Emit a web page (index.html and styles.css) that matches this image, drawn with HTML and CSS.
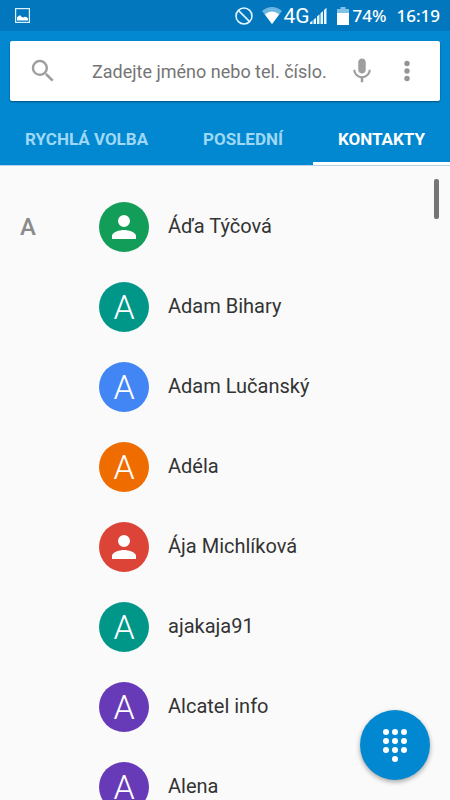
FILE: index.html
```html
<!DOCTYPE html>
<html lang="cs">
<head>
<meta charset="utf-8">
<meta name="viewport" content="width=device-width, initial-scale=1">
<title>Kontakty</title>
<link rel="stylesheet" href="styles.css">
</head>
<body>
<div class="app">
  <div class="status">
    <svg class="status-picture" width="15" height="15" viewBox="0 0 15 15" aria-hidden="true"><rect x=".6" y=".6" width="13.8" height="13.8" fill="none" stroke="#d9f2fc" stroke-width="1.2"/><path fill="#fff" d="M2 12.5V9.2L4 7.7 5.2 7.3 6.5 8.8 8 9.6 9.7 8.7 11.5 9.1 13 10.5V12.5Z"/></svg>
    <svg width="18" height="18" viewBox="0 0 18 18" aria-hidden="true"><g fill="none" stroke="#e4f7ff" stroke-width="1.6"><circle cx="9" cy="9" r="8"/><path d="M3.4 3.4 14.6 14.6"/></g></svg>
    <svg class="status-wifi" width="20" height="17" viewBox="0 0 20 17" aria-hidden="true"><path fill="#6bb7e2" d="M0 4Q10-4 20 4L10 17Z"/><path fill="#fff" d="M2.8 7.2Q10 2 17.2 7.2L10 17Z"/></svg>
    <span class="network">4G</span>
    <svg width="17" height="18" viewBox="0 0 17 18" aria-hidden="true"><path fill="#e8f8ff" d="M0 17v-1.500l2.500-2V17ZM3.500 17v-4.300l2.500-2V17ZM7 17v-7.600l2.500-2.200V17ZM10.500 17V6.200L13 4V17ZM14 17V3l2.500-2.200V17Z"/></svg>
    <svg class="status-battery" width="12" height="18" viewBox="0 0 12 18" aria-hidden="true"><path fill="#80c2e6" d="M3.500 0h5v2H12v4H0V2h3.500Z"/><path fill="#fff" d="M0 6h12v12H0Z"/></svg>
    <span class="status-text">74%</span>
    <span class="status-text clock">16:19</span>
  </div>
  <header class="header">
    <form class="search">
      <svg class="search-icon" width="30" height="30" viewBox="0 0 24 24" aria-hidden="true"><path fill="#9e9e9e" d="M15.500 14h-.79l-.28-.27A6.471 6.471 0 0 0 16 9.500 6.500 6.500 0 1 0 9.500 16c1.610 0 3.090-.59 4.230-1.570l.27.28v.79l5 4.990L20.490 19l-4.990-5zm-6 0C7.010 14 5 11.990 5 9.500S7.010 5 9.500 5 14 7.010 14 9.500 11.990 14 9.500 14z"/></svg>
      <input class="search-input" type="text" aria-label="Hledat kontakt" placeholder="Zadejte jméno nebo tel. číslo.">
      <button class="icon-button" type="button" aria-label="Hlasové hledání"><svg width="30" height="30" viewBox="0 0 24 24"><path fill="#9e9e9e" d="M12 14c1.660 0 3-1.340 3-3V5c0-1.660-1.340-3-3-3S9 3.340 9 5v6c0 1.660 1.340 3 3 3zm5.300-3c0 3-2.540 5.100-5.300 5.100S6.700 14 6.700 11H5c0 3.410 2.720 6.230 6 6.720V21h2v-3.280c3.280-.48 6-3.300 6-6.720h-1.700z"/></svg></button>
      <button class="icon-button" type="button" aria-label="Další možnosti"><svg width="30" height="30" viewBox="0 0 30 30"><g fill="#949494"><circle cx="15" cy="7.500" r="2.700"/><circle cx="15" cy="15" r="2.700"/><circle cx="15" cy="22.500" r="2.700"/></g></svg></button>
    </form>
    <nav class="tabs">
      <a class="tab" href="#rychla-volba">RYCHLÁ VOLBA</a>
      <a class="tab" href="#posledni">POSLEDNÍ</a>
      <a class="tab tab-active" href="#kontakty" aria-current="page">KONTAKTY</a>
    </nav>
  </header>
  <main class="contacts" id="kontakty">
    <h2 class="section-letter">A</h2>
    <ul class="list">
      <li class="contact"><span class="avatar green"><svg width="36" height="36" viewBox="0 0 24 24" aria-hidden="true"><path fill="#fff" d="M12 12a4 4 0 1 0 0-8 4 4 0 0 0 0 8zm0 2c-2.670 0-8 1.340-8 4v2h16v-2c0-2.660-5.330-4-8-4z"/></svg></span><span class="name">Áďa Týčová</span></li>
      <li class="contact"><span class="avatar teal">A</span><span class="name">Adam Bihary</span></li>
      <li class="contact"><span class="avatar blue">A</span><span class="name">Adam Lučanský</span></li>
      <li class="contact"><span class="avatar orange">A</span><span class="name">Adéla</span></li>
      <li class="contact"><span class="avatar red"><svg width="36" height="36" viewBox="0 0 24 24" aria-hidden="true"><path fill="#fff" d="M12 12a4 4 0 1 0 0-8 4 4 0 0 0 0 8zm0 2c-2.670 0-8 1.340-8 4v2h16v-2c0-2.660-5.330-4-8-4z"/></svg></span><span class="name">Ája Michlíková</span></li>
      <li class="contact"><span class="avatar teal">A</span><span class="name">ajakaja91</span></li>
      <li class="contact"><span class="avatar purple">A</span><span class="name">Alcatel info</span></li>
      <li class="contact"><span class="avatar purple">A</span><span class="name">Alena</span></li>
    </ul>
  </main>
  <div class="scroll-thumb"></div>
  <button class="dial" type="button" aria-label="Číselník"><svg width="30" height="36" viewBox="0 0 30 36"><g fill="#fff"><circle cx="6" cy="5" r="3"/><circle cx="15" cy="5" r="3"/><circle cx="24" cy="5" r="3"/><circle cx="6" cy="14" r="3"/><circle cx="15" cy="14" r="3"/><circle cx="24" cy="14" r="3"/><circle cx="6" cy="23" r="3"/><circle cx="15" cy="23" r="3"/><circle cx="24" cy="23" r="3"/><circle cx="15" cy="32" r="3"/></g></svg></button>
</div>
</body>
</html>
```
FILE: styles.css
```css
* {
  box-sizing: border-box;
}

body {
  margin: 0;
  background: #fafafa;
  color: #333;
  font-family: Roboto, "Liberation Sans", sans-serif;
}

.app {
  position: relative;
  display: flex;
  flex-direction: column;
  height: 100vh;
  overflow: hidden;
}

.status {
  display: flex;
  flex: none;
  align-items: center;
  height: 31px;
  padding: 0 10px 0 15px;
  background: #0277bd;
  color: #fff;
}

.status-picture {
  margin-right: auto;
}

.status-wifi {
  margin: 0 2px 0 9px;
}

.network {
  width: 26px;
  font-size: 21px;
  line-height: 31px;
  padding-top: 2px;
}

.status-battery {
  margin: 0 4px 0 10px;
}

.status-text {
  font-family: "Noto Sans", sans-serif;
  font-size: 17px;
  font-weight: 500;
  line-height: 31px;
}

.clock {
  margin-left: 10px;
}

.header {
  flex: none;
  padding-top: 10px;
  background: #0288d1;
  border-bottom: 1px solid #b5d3e5;
}

.search {
  display: flex;
  align-items: center;
  height: 60px;
  margin: 0 10px;
  padding: 0 18px;
  border-radius: 2px;
  background: #fff;
  box-shadow: 0 1px 2px rgba(0, 0, 0, 0.4);
}

.search-icon {
  flex: none;
}

.search-input {
  flex: 1;
  min-width: 0;
  margin-left: 34px;
  padding: 2px 0 0;
  border: 0;
  outline: 0;
  background: none;
  color: #333;
  font: 18px/24px Roboto, sans-serif;
}

.search-input::placeholder {
  color: #757575;
  opacity: 1;
}

.icon-button {
  flex: none;
  height: 30px;
  margin-left: 15px;
  padding: 0;
  border: 0;
  background: none;
}

.tabs {
  display: flex;
  justify-content: space-between;
  height: 64px;
}

.tab {
  height: 64px;
  padding: 0 25px;
  border-bottom: 3px solid transparent;
  color: #9fd8f5;
  font-size: 17px;
  font-weight: 700;
  line-height: 76px;
  text-decoration: none;
  white-space: nowrap;
}

.tab-active {
  border-color: #fff;
  color: #fff;
}

.contacts {
  display: flex;
  flex: 1;
  min-height: 0;
  padding-top: 21px;
  overflow-y: auto;
  scrollbar-width: none;
}

.section-letter {
  flex: none;
  width: 99px;
  margin: 0;
  padding-left: 20px;
  color: #8a8a8a;
  font-size: 24px;
  font-weight: 500;
  line-height: 80px;
}

.list {
  flex: 1;
  min-width: 0;
  margin: 0;
  padding: 0;
  list-style: none;
}

.contact {
  display: flex;
  align-items: center;
  gap: 19px;
  height: 80px;
}

.avatar {
  display: flex;
  flex: none;
  align-items: center;
  justify-content: center;
  width: 50px;
  height: 50px;
  border-radius: 50%;
  color: #fff;
  font-size: 34px;
  font-weight: 300;
  line-height: 50px;
}

.green {
  background: #129d58;
}

.teal {
  background: #009688;
}

.blue {
  background: #4285f4;
}

.orange {
  background: #ef6c00;
}

.red {
  background: #db4437;
}

.purple {
  background: #673ab7;
}

.name {
  padding-bottom: 2px;
  font-size: 20px;
  line-height: 24px;
}

.scroll-thumb {
  position: absolute;
  top: 179px;
  right: 11px;
  width: 5px;
  height: 40px;
  border-radius: 2px;
  background: #757575;
}

.dial {
  position: absolute;
  right: 20px;
  bottom: 20px;
  display: flex;
  align-items: center;
  justify-content: center;
  width: 70px;
  height: 70px;
  padding: 0;
  border: 0;
  border-radius: 50%;
  background: #0288d1;
  box-shadow: 0 2px 5px rgba(0, 0, 0, 0.35);
}
```
